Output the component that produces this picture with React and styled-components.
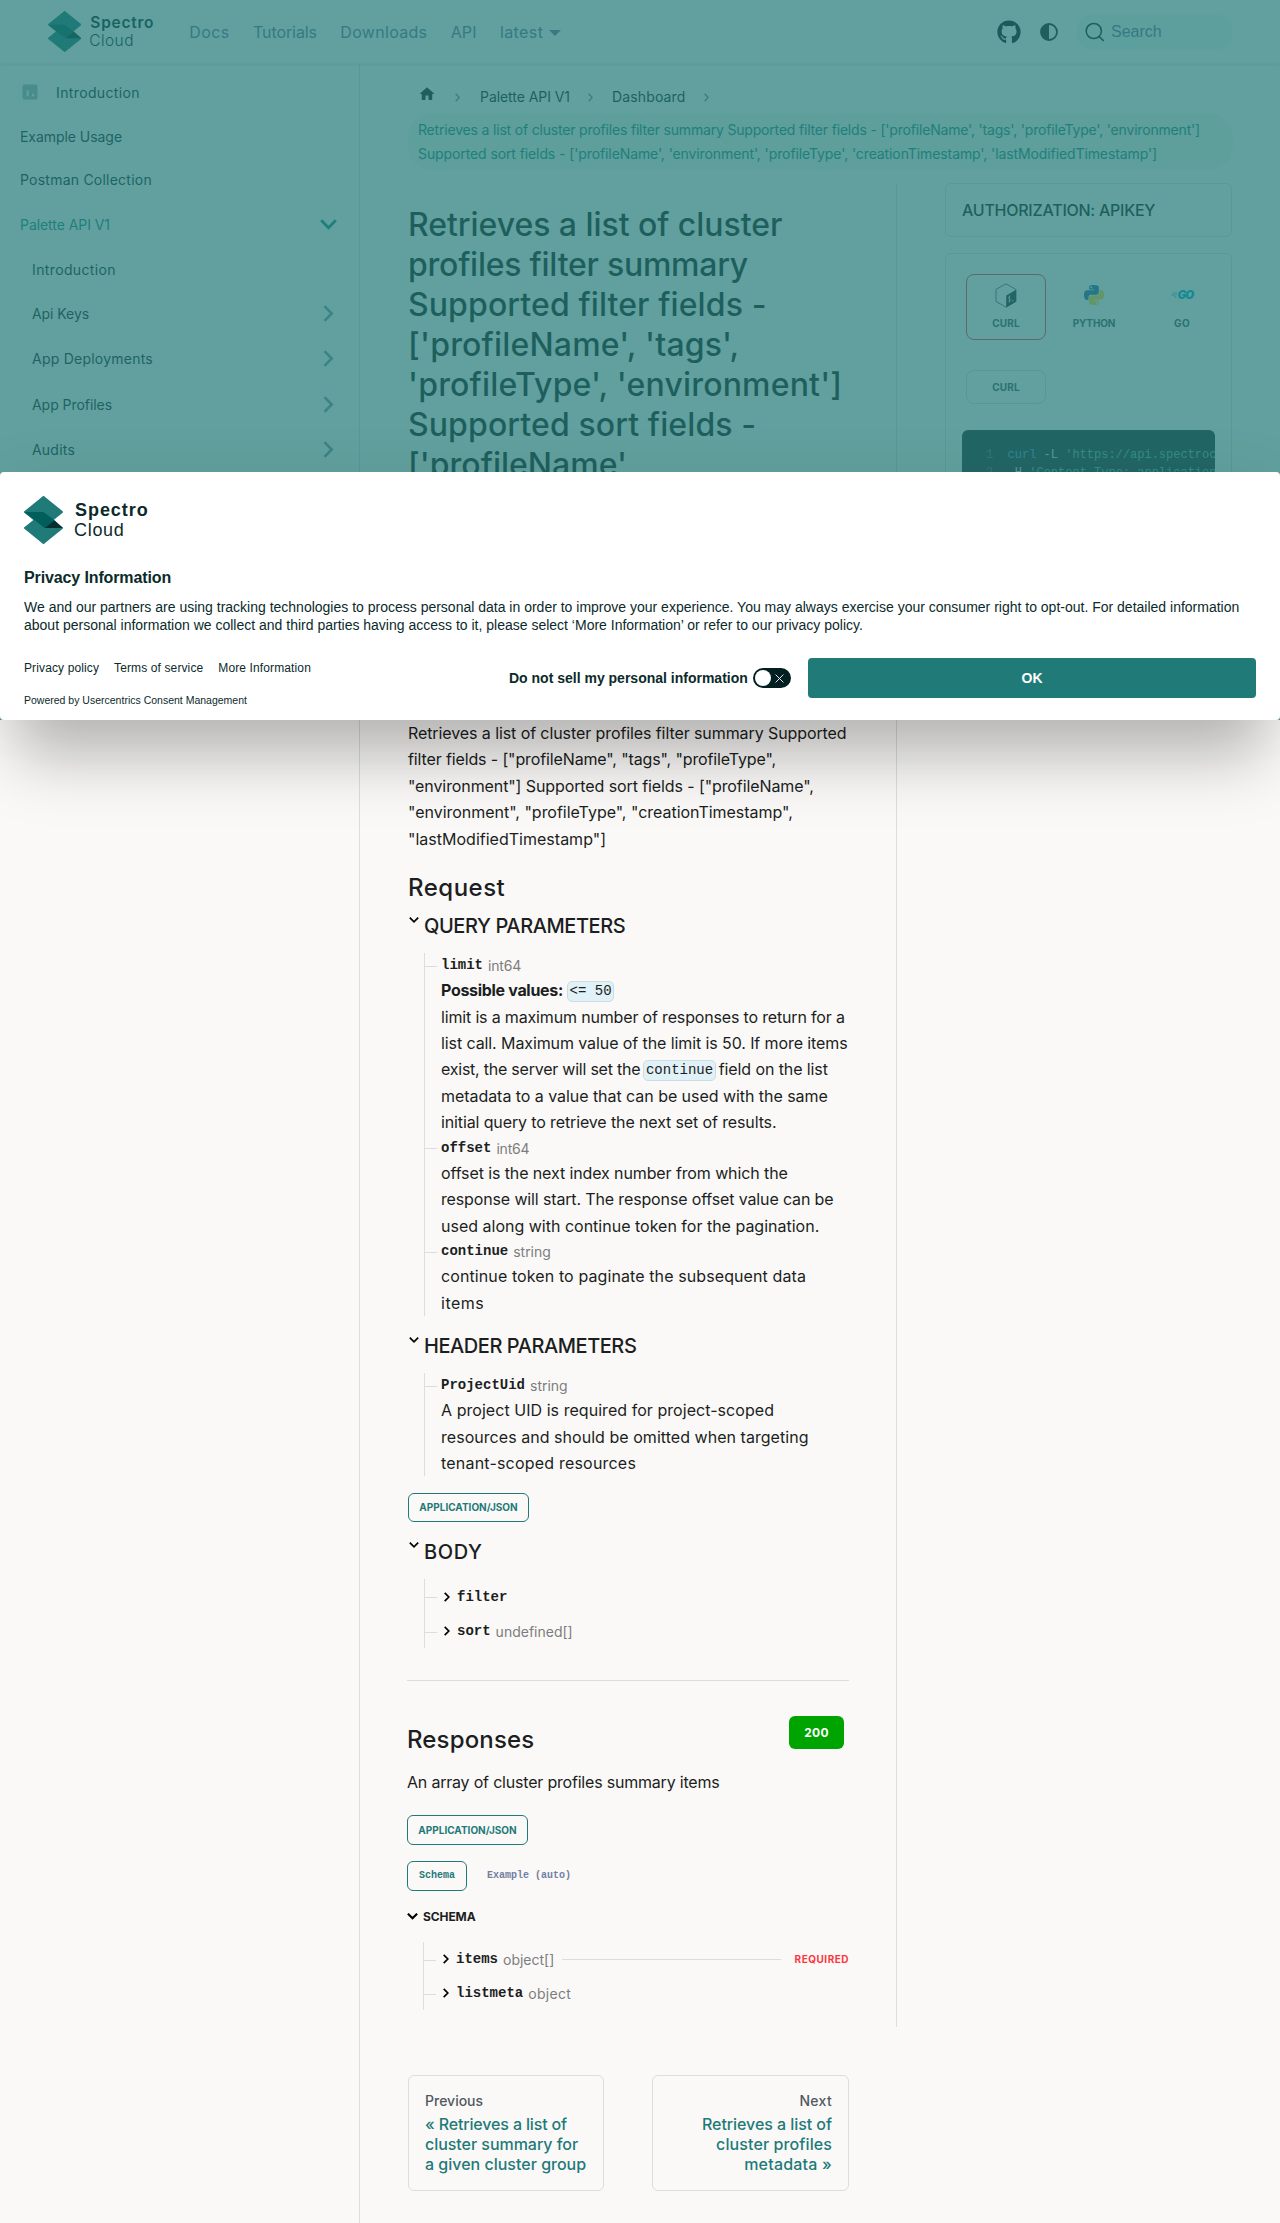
import React from "react";
import styled, { createGlobalStyle } from "styled-components";
import { FaGithub } from "react-icons/fa";

const sans = `Inter, "Noto Sans", sans-serif`;
const arial = `"Liberation Sans", Arial, sans-serif`;
const mono = `"Liberation Mono", "Courier New", monospace`;
const teal = "#1f7a78";
const ink = "#1c1e21";
const line = "#dadde1";
const nav = "#6b76a2";

const GlobalStyle = createGlobalStyle`
  *, *::before, *::after { box-sizing: border-box; }
  body { margin: 0; background: #faf9f8; color: ${ink}; font-family: ${sans}; font-size: 16px; }
  a { color: inherit; text-decoration: none; }
  h1, h2, h3, p, ul { margin: 0; padding: 0; font-weight: 400; }
  ul { list-style: none; }
  svg { display: block; flex: none; }
`;

const Page = styled.div`
  position: relative;
  width: 1280px;
  height: 2223px;
  overflow: hidden;
`;

/* One line of text with its own tracking */
const Line = styled.span`
  display: block;
  white-space: nowrap;
  letter-spacing: ${(p) => p.$ls || 0}px;
`;

/* ---------- Navbar ---------- */
const Navbar = styled.header`
  height: 64px;
  padding: 0 48px;
  display: flex;
  align-items: center;
  border-bottom: 1px solid #f0efee;
  box-shadow: 0 1px 2px rgba(0, 0, 0, 0.1);
`;

const Brand = styled.a`
  display: flex;
  align-items: center;
  gap: ${(p) => p.$gap}px;
`;

const BrandText = styled.div`
  display: flex;
  flex-direction: column;
  color: #0b2a2b;
  line-height: ${(p) => p.$lh}px;
  font-size: ${(p) => p.$size}px;
`;

const BrandTop = styled(Line)`
  font-weight: 600;
`;

const BrandBottom = styled(Line)`
  font-weight: 300;
  margin-left: -1px;
`;

const NavLinks = styled.nav`
  display: flex;
  align-items: center;
  gap: 23.4px;
  margin-left: 35px;
  color: ${nav};
`;

const Caret = styled.i`
  margin-left: -18px;
  border: 6px solid transparent;
  border-top: 6.5px solid ${nav};
  border-bottom: 0;
  margin-top: 3px;
`;

const NavTools = styled.div`
  margin-left: auto;
  display: flex;
  align-items: center;
`;

const Search = styled.div`
  margin-left: 19px;
  width: 155px;
  height: 36px;
  border-radius: 18px;
  background: #e9f3f2;
  display: flex;
  align-items: center;
  gap: 6px;
  padding-left: 8px;
  color: ${nav};
  font-family: ${arial};
  font-size: 16px;
`;

/* ---------- Layout ---------- */
const Shell = styled.div`
  display: grid;
  grid-template-columns: 360px 1fr;
  height: 2159px;
`;

const Sidebar = styled.aside`
  border-right: 1px solid ${line};
  padding-top: 6px;
  font-size: 14px;
`;

const SideItem = styled.a`
  display: flex;
  align-items: center;
  height: ${(p) => p.$h || 45}px;
  padding-left: ${(p) => (p.$nested ? 32 : 20)}px;
  padding-right: ${(p) => (p.$open ? 22 : 25)}px;
  color: ${(p) => (p.$active ? "#1f8a80" : "#1c2b33")};
  justify-content: space-between;
`;

const SideLabel = styled.div`
  display: flex;
  align-items: center;
  gap: 16px;
`;

const Main = styled.main`
  min-width: 0;
`;

const Crumbs = styled.div`
  height: 119px;
  padding: 22px 0 0 48px;
  font-size: 14px;
`;

const CrumbRow = styled.div`
  display: flex;
  align-items: center;
  height: 20px;
`;

const Crumb = styled(Line)`
  margin-left: ${(p) => p.$ml}px;
`;

const CrumbHome = styled.a`
  margin: -4px 0 0 10px;
`;

const CrumbPill = styled.div`
  margin-top: 7px;
  height: 57px;
  width: 825px;
  padding: 5px 0 0 10px;
  border-radius: 24px;
  background: rgba(0, 0, 0, 0.035);
  line-height: 24px;
  color: #1c8c84;
`;

const Columns = styled.div`
  display: grid;
  grid-template-columns: 537px 335px;
`;

const Doc = styled.article`
  height: 1844px;
  padding: 21px 47px 0 48px;
  border-right: 1px solid ${line};
`;

const Title = styled.h1`
  font-size: 32px;
  line-height: 40px;
  font-weight: 450;
  height: 516px;
  padding-top: 1px;
`;

const Paragraph = styled.p`
  line-height: 26.4px;
`;

const Heading = styled.h2`
  font-size: 24px;
  font-weight: 450;
  line-height: 30px;
`;

const Section = styled.section`
  margin-top: ${(p) => p.$mt}px;
`;

const SectionTitle = styled.h3`
  display: flex;
  align-items: center;
  height: 30px;
  font-size: 20px;
  font-weight: 450;
  svg {
    margin: ${(p) => p.$up || -13}px 5px 0 1px;
  }
`;

const Tree = styled.ul`
  margin: ${(p) => p.$mt || 12}px 0 0 16px;
  border-left: 1px solid ${line};
`;

const Body = styled.div`
  padding-left: 16px;
  line-height: 26.4px;
`;

const ParamRow = styled.div`
  display: flex;
  align-items: center;
  height: ${(p) => p.$h || 24.2}px;
  &::before {
    content: "";
    width: 12px;
    height: 1px;
    margin: 2px 4px 0 0;
    background: ${line};
    flex: none;
  }
`;

const Chevron = styled.svg`
  margin: 0 7px 0 3px;
`;

const ParamName = styled.strong`
  font-family: ${mono};
  font-size: 14px;
  font-weight: 700;
`;

const ParamType = styled(Line)`
  font-size: 14px;
  color: #7d7d7d;
  margin: 1px 0 0 5px;
`;

const Rule = styled.span`
  flex: 1;
  height: 1px;
  background: ${line};
  margin: 0 14px 0 8px;
`;

const Required = styled(Line)`
  color: #fa383e;
  font-size: 10px;
  font-weight: 700;
`;

const Mixed = styled.div`
  display: flex;
  align-items: center;
  height: 26.4px;
`;

const Code = styled.code`
  font-family: ${mono};
  font-size: 14px;
  line-height: 19px;
  height: 21px;
  margin: 2px ${(p) => p.$mr || 0}px 0 ${(p) => p.$ml || 4}px;
  padding: 0 1.6px;
  border: 1px solid #c9dde3;
  border-radius: 5px;
  background: #e0f1f7;
`;

const Strong = styled(Line)`
  font-weight: 700;
`;

const Chip = styled.button`
  display: flex;
  align-items: center;
  justify-content: center;
  width: ${(p) => p.$w || 121}px;
  height: ${(p) => p.$h || 30}px;
  padding: 0 0 ${(p) => p.$pb || 0}px;
  border: 1px solid ${(p) => (p.$plain ? "transparent" : teal)};
  border-radius: 6px;
  background: none;
  color: ${(p) => (p.$plain ? "#7080a4" : teal)};
  font: 700 10px ${(p) => (p.$mono ? mono : sans)};
  margin-top: ${(p) => p.$mt || 0}px;
`;

const Divider = styled.hr`
  margin: 32px 0 0 -1px;
  border: 0;
  height: 1px;
  background: ${line};
`;

const Responses = styled.section`
  margin-left: -1px;
`;

const ResponsesHead = styled.div`
  display: flex;
  justify-content: space-between;
  height: 53px;
  margin-top: 35px;
  padding-right: 5px;
  h2 {
    margin-top: 9px;
  }
`;

const Status = styled.span`
  display: flex;
  align-items: center;
  justify-content: center;
  width: 55px;
  height: 33px;
  border-radius: 6px;
  background: #00a400;
  color: #fff;
  font-size: 12px;
  font-weight: 700;
`;

const Tabs = styled.div`
  display: flex;
  gap: 10px;
  margin-top: 16px;
`;

const SchemaTitle = styled.div`
  display: flex;
  align-items: center;
  gap: 5px;
  height: 20px;
  margin-top: 15.5px;
  font-size: 12px;
  font-weight: 700;
`;

const Pager = styled.nav`
  display: grid;
  grid-template-columns: 196px 197px;
  gap: 48px;
  margin: 48px 0 0 48px;
`;

const PagerCard = styled.a`
  height: 116px;
  border: 1px solid ${line};
  border-radius: 6px;
  padding: 15px 16px;
  display: flex;
  flex-direction: column;
  align-items: ${(p) => (p.$end ? "flex-end" : "flex-start")};
  font-weight: 450;
  line-height: 20px;
  color: ${teal};
`;

const PagerSub = styled(Line)`
  font-size: 14px;
  color: #525860;
  margin-bottom: 3px;
`;

/* ---------- Right column ---------- */
const Aside = styled.aside`
  padding-left: 48px;
`;

const Card = styled.div`
  border: 1px solid #d6dfe0;
  border-radius: 6px;
  padding: ${(p) => p.$pad};
  font-weight: 450;
  height: ${(p) => p.$h}px;
`;

const LangTabs = styled.div`
  display: grid;
  grid-template-columns: 80px 80px 80px;
  gap: 8px;
  padding-left: 4px;
  overflow: hidden;
`;

const Lang = styled.button`
  height: ${(p) => (p.$small ? 34 : 66)}px;
  border: 1px solid ${(p) => (p.$active ? "#f4433c" : p.$small ? "#cfdcdd" : "transparent")};
  border-radius: 8px;
  padding: ${(p) => (p.$small ? "0" : "5px 0 0")};
  background: none;
  display: flex;
  flex-direction: column;
  align-items: center;
  justify-content: ${(p) => (p.$small ? "center" : "flex-start")};
  gap: 7px;
  color: #4b5a63;
  font: 700 10px ${sans};
`;

const LangIcon = styled.div`
  height: 30px;
  display: flex;
  align-items: center;
`;

const GoMark = styled.span`
  display: flex;
  align-items: center;
  gap: 1px;
  color: #00acd7;
  font: italic 900 11.5px/12px ${sans};
  letter-spacing: -0.9px;
  margin-top: -1px;
`;

const Terminal = styled.pre`
  margin: 26px 0 0;
  height: 200px;
  width: 253px;
  overflow: hidden;
  border-radius: 6px;
  background: #25363a;
  color: #d8e4e4;
  font: 12px/18px ${mono};
  padding: 16px 0 0 24px;
`;

const Tok = styled.span`
  color: ${(p) => p.$c};
`;

/* ---------- Consent dialog ---------- */
const Overlay = styled.div`
  position: absolute;
  inset: 0 0 auto 0;
  height: 720px;
  background: rgba(31, 122, 120, 0.7);
  display: flex;
  align-items: flex-end;
`;

const Dialog = styled.section`
  width: 1280px;
  height: 248px;
  border-radius: 4px;
  background: #fff;
  padding: 24px;
  color: #0b2a2b;
  font-family: ${arial};
  box-shadow: 0 54px 60px -16px rgba(0, 0, 0, 0.25), 0 0 60px rgba(0, 0, 0, 0.06);
`;

const DialogTitle = styled.h2`
  margin-top: 24px;
  font-size: 16px;
  line-height: 20px;
  font-weight: 700;
  letter-spacing: -0.12px;
`;

const DialogText = styled.p`
  margin-top: 10px;
  font-size: 14px;
  line-height: 18px;
`;

const DialogFoot = styled.div`
  display: flex;
  margin-top: 24px;
`;

const FootLinks = styled.div`
  width: 485px;
  font-size: 12px;
  line-height: 14px;
  padding-top: 3px;
`;

const LinkRow = styled.div`
  display: flex;
  gap: 15px;
  letter-spacing: 0.12px;
`;

const Powered = styled.div`
  margin-top: 18px;
  font-size: 10.5px;
`;

const OptOut = styled.label`
  display: flex;
  align-items: center;
  height: 40px;
  gap: 5px;
  width: 299px;
  font-size: 14px;
  font-weight: 700;
`;

const Toggle = styled.span`
  width: 38px;
  height: 20px;
  border-radius: 10px;
  background: #031f22;
  display: flex;
  align-items: center;
  justify-content: space-between;
  padding: 0 7px 0 2px;
  &::before {
    content: "";
    width: 16px;
    height: 16px;
    border-radius: 50%;
    background: #fff;
  }
`;

const OkButton = styled.button`
  width: 448px;
  height: 40px;
  border: 0;
  border-radius: 4px;
  background: ${teal};
  color: #fff;
  font: 700 14px ${arial};
`;

/* ---------- Icons ---------- */
const LogoMark = ({ h }) => (
  <svg width={(h * 39) / 48} height={h} viewBox="0 0 39 48">
    <g fill="#1f7a78" stroke="#1f7a78" strokeWidth="2" strokeLinejoin="round">
      <path d="M19.5 1 38 16 19.5 31 1 16z" />
      <path d="M19.5 17 38 32 19.5 47 1 32z" />
    </g>
    <path d="M.4 16H19.5L30.5 24.3 20.5 32z" fill="#005f5c" />
    <path d="M30.5 24.3 38.6 32H20.5z" fill="#052f31" />
  </svg>
);

const Down = ({ size = 10, color = "#000", w = 1.7 }) => (
  <svg width={size} height={size * 0.6} viewBox="0 0 10 6" fill="none" stroke={color} strokeWidth={w}>
    <path d="M.8.6 5 4.8 9.2.6" />
  </svg>
);

const Right = () => (
  <Chevron width="6" height="10" viewBox="0 0 6 10" fill="none" stroke="#000" strokeWidth="1.7">
    <path d="M.7.8 4.8 5 .7 9.2" />
  </Chevron>
);

const CrumbArrow = styled.svg`
  margin-left: ${(p) => p.$ml}px;
  margin-top: 2px;
`;

const CrumbSep = ({ ml }) => (
  <CrumbArrow $ml={ml} width="5" height="9" viewBox="0 0 5 9" fill="none" stroke="#7b8288" strokeWidth="1.3">
    <path d="M.7.7 4.2 4.5.7 8.3" />
  </CrumbArrow>
);

const SideChevron = ({ open }) =>
  open ? (
    <svg width="17" height="11" viewBox="0 0 17 11" fill="none" stroke="#1f8a80" strokeWidth="2.8">
      <path d="M1.2 1.3 8.5 8.7 15.8 1.3" />
    </svg>
  ) : (
    <svg width="11" height="17" viewBox="0 0 11 17" fill="none" stroke="#8294a6" strokeWidth="2.6">
      <path d="M1.5 1.2 8.7 8.5 1.5 15.8" />
    </svg>
  );

const HomeIcon = () => (
  <svg width="18" height="18" viewBox="0 0 24 24" fill={ink}>
    <path d="M10 19v-5h4v5c0 .55.45 1 1 1h3c.55 0 1-.45 1-1v-7h1.7c.46 0 .68-.57.33-.87L12.67 3.6c-.38-.34-.96-.34-1.34 0l-8.36 7.53c-.34.3-.13.87.33.87H5v7c0 .55.45 1 1 1h3c.55 0 1-.45 1-1z" />
  </svg>
);

const ContrastIcon = styled.svg`
  margin-left: 19px;
`;

const BashIcon = () => (
  <svg width="22" height="25" viewBox="0 0 22 25">
    <path d="M11 .8 20.8 6.4V18.4L11 24.2 1 18.4V6.4z" fill="none" stroke="#3a4f55" strokeWidth=".8" />
    <path d="M11.2 12.6 21.2 6.8V18.4L11.2 24.4z" fill="#24363a" />
    <path
      d="M15.2 13.2c-1.6.2-2 1.9-.8 2.6 1.2.6.9 2.4-.8 2.6M14.4 12.5v7M16.8 18.1l1.7-.9"
      fill="none"
      stroke="#e7f1f1"
      strokeWidth=".8"
    />
  </svg>
);

const snake =
  "M14.25.18l.9.2.73.26.59.3.45.32.34.34.25.34.16.33.1.3.04.26.02.2-.01.13V8.5l-.05.63-.13.55-.21.46-.26.38-.3.31-.33.25-.35.19-.35.14-.33.1-.3.07-.26.04-.21.02H8.77l-.69.05-.59.14-.5.22-.41.27-.33.32-.27.35-.2.36-.15.37-.1.35-.07.32-.04.27-.02.21v3.06H3.17l-.21-.03-.28-.07-.32-.12-.35-.18-.36-.26-.36-.36-.35-.46-.32-.59-.28-.73-.21-.88-.14-1.05-.05-1.23.06-1.22.16-1.04.24-.87.32-.71.36-.57.4-.44.42-.33.42-.24.4-.16.36-.1.32-.05.24-.01h.16l.06.01h8.16v-.83H6.18l-.01-2.75-.02-.37.05-.34.11-.31.17-.28.25-.26.31-.23.38-.2.44-.18.51-.15.58-.12.64-.1.71-.06.77-.04.84-.02 1.27.05zm-6.3 1.98l-.23.33-.08.41.08.41.23.34.33.22.41.09.41-.09.33-.22.23-.34.08-.41-.08-.41-.23-.33-.33-.22-.41-.09-.41.09z";

const PythonIcon = () => (
  <svg width="20" height="20" viewBox="0 0 24 24">
    <path d={snake} fill="#2f6fa8" />
    <path d={snake} fill="#ffd845" transform="rotate(180 12 12)" />
  </svg>
);

const Logo = ({ h, gap, size, lh, top, bottom }) => (
  <Brand $gap={gap}>
    <LogoMark h={h} />
    <BrandText $size={size} $lh={lh}>
      <BrandTop $ls={top}>Spectro</BrandTop>
      <BrandBottom $ls={bottom}>Cloud</BrandBottom>
    </BrandText>
  </Brand>
);

const Param = ({ name, type, ls, children }) => (
  <li>
    <ParamRow>
      <ParamName>{name}</ParamName>
      <ParamType $ls={ls}>{type}</ParamType>
    </ParamRow>
    <Body>{children}</Body>
  </li>
);

const sidebar = [
  ["Api Keys", -0.07],
  ["App Deployments", 0.23],
  ["App Profiles", -0.05],
  ["Audits", 0.21],
];

export default function App() {
  return (
    <Page>
      <GlobalStyle />
      <Navbar>
        <Logo h={41} gap={9} size={15.5} lh={18} top={0.75} bottom={0.4} />
        <NavLinks>
          <Line $ls={0.4}>Docs</Line>
          <Line $ls={-0.08}>Tutorials</Line>
          <Line $ls={0.3}>Downloads</Line>
          <Line $ls={0.1}>API</Line>
          <Line $ls={0.4}>latest</Line>
          <Caret />
        </NavLinks>
        <NavTools>
          <FaGithub size={24} color="#0b1214" />
          <ContrastIcon width="18" height="18" viewBox="0 0 18 18">
            <circle cx="9" cy="9" r="8" fill="none" stroke={ink} strokeWidth="1.8" />
            <path d="M9 1a8 8 0 0 0 0 16z" fill={ink} />
          </ContrastIcon>
          <Search>
            <svg width="20" height="20" viewBox="0 0 20 20" fill="none" stroke={ink} strokeWidth="1.5">
              <circle cx="8.8" cy="9" r="7.6" />
              <path d="M14.2 14.6 18.8 19" />
            </svg>
            Search
          </Search>
        </NavTools>
      </Navbar>

      <Shell>
        <Sidebar>
          <SideItem $h={44}>
            <SideLabel>
              <svg width="20" height="20" viewBox="0 0 24 24" fill="#a9b7b9">
                <path d="M19 3H5c-1.1 0-2 .9-2 2v14c0 1.1.9 2 2 2h14c1.1 0 2-.9 2-2V5c0-1.1-.9-2-2-2zM10.500 17H8V10h2.500v7zm6.500 0h-2.500v-3h2.500v3z" />
              </svg>
              <Line $ls={0.37}>Introduction</Line>
            </SideLabel>
          </SideItem>
          <SideItem $h={44}>
            <Line $ls={-0.05}>Example Usage</Line>
          </SideItem>
          <SideItem $h={43}>
            <Line $ls={0.23}>Postman Collection</Line>
          </SideItem>
          <SideItem $h={46} $active $open>
            <Line $ls={-0.06}>Palette API V1</Line>
            <SideChevron open />
          </SideItem>
          <SideItem $h={44} $nested>
            <Line $ls={0.37}>Introduction</Line>
          </SideItem>
          {sidebar.map(([label, ls]) => (
            <SideItem key={label} $nested $h={45.3}>
              <Line $ls={ls}>{label}</Line>
              <SideChevron />
            </SideItem>
          ))}
        </Sidebar>

        <Main>
          <Crumbs>
            <CrumbRow>
              <CrumbHome>
                <HomeIcon />
              </CrumbHome>
              <CrumbSep ml={19} />
              <Crumb $ml={20} $ls={-0.06}>Palette API V1</Crumb>
              <CrumbSep ml={18} />
              <Crumb $ml={19} $ls={0.15}>Dashboard</Crumb>
              <CrumbSep ml={18} />
            </CrumbRow>
            <CrumbPill>
              <Line $ls={-0.185}>
                Retrieves a list of cluster profiles filter summary Supported filter fields - ['profileName', 'tags',
                'profileType', 'environment']
              </Line>
              <Line $ls={-0.101}>
                Supported sort fields - ['profileName', 'environment', 'profileType', 'creationTimestamp',
                'lastModifiedTimestamp']
              </Line>
            </CrumbPill>
          </Crumbs>

          <Columns>
            <Doc>
              <Title>
                <Line $ls={-0.05}>Retrieves a list of cluster</Line>
                <Line $ls={-0.25}>profiles filter summary</Line>
                <Line $ls={0.1}>Supported filter fields -</Line>
                <Line $ls={0.18}>['profileName', 'tags',</Line>
                <Line $ls={0.18}>'profileType', 'environment']</Line>
                <Line $ls={0.1}>Supported sort fields -</Line>
                <Line $ls={0}>['profileName'</Line>
              </Title>

              <Paragraph>
                <Line $ls={-0.09}>Retrieves a list of cluster profiles filter summary Supported</Line>
                <Line $ls={-0.127}>filter fields - ["profileName", "tags", "profileType",</Line>
                <Line $ls={-0.1}>"environment"] Supported sort fields - ["profileName",</Line>
                <Line $ls={-0.02}>"environment", "profileType", "creationTimestamp",</Line>
                <Line $ls={0.01}>"lastModifiedTimestamp"]</Line>
              </Paragraph>

              <Section $mt={21}>
                <Heading>
                  <Line $ls={0.5}>Request</Line>
                </Heading>
              </Section>

              <Section $mt={8}>
                <SectionTitle>
                  <Down />
                  <Line $ls={-0.41}>QUERY PARAMETERS</Line>
                </SectionTitle>
                <Tree>
                  <Param name="limit" type="int64" ls={-0.19}>
                    <Mixed>
                      <Strong $ls={-0.31}>Possible values:</Strong>
                      <Code>{"<= 50"}</Code>
                    </Mixed>
                    <Line $ls={-0.165}>limit is a maximum number of responses to return for a</Line>
                    <Line $ls={-0.095}>list call. Maximum value of the limit is 50. If more items</Line>
                    <Mixed>
                      <Line $ls={-0.23}>exist, the server will set the</Line>
                      <Code $ml={3} $mr={3}>continue</Code>
                      <Line $ls={-0.1}>field on the list</Line>
                    </Mixed>
                    <Line $ls={-0.05}>metadata to a value that can be used with the same</Line>
                    <Line $ls={-0.125}>initial query to retrieve the next set of results.</Line>
                  </Param>
                  <Param name="offset" type="int64" ls={-0.19}>
                    <Line $ls={-0.11}>offset is the next index number from which the</Line>
                    <Line $ls={-0.14}>response will start. The response offset value can be</Line>
                    <Line $ls={0}>used along with continue token for the pagination.</Line>
                  </Param>
                  <Param name="continue" type="string" ls={-0.03}>
                    <Line $ls={0.1}>continue token to paginate the subsequent data</Line>
                    <Line $ls={0.5}>items</Line>
                  </Param>
                </Tree>
              </Section>

              <Section $mt={15}>
                <SectionTitle>
                  <Down />
                  <Line $ls={-0.44}>HEADER PARAMETERS</Line>
                </SectionTitle>
                <Tree>
                  <Param name="ProjectUid" type="string" ls={-0.03}>
                    <Line $ls={0.048}>A project UID is required for project-scoped</Line>
                    <Line $ls={0.04}>resources and should be omitted when targeting</Line>
                    <Line $ls={0.2}>tenant-scoped resources</Line>
                  </Param>
                </Tree>
              </Section>

              <Chip $mt={16.4} $h={29}>APPLICATION/JSON</Chip>

              <Section $mt={15}>
                <SectionTitle>
                  <Down />
                  <Line $ls={0.6}>BODY</Line>
                </SectionTitle>
                <Tree $mt={12}>
                  <ParamRow $h={35.5}>
                    <Right />
                    <ParamName>filter</ParamName>
                  </ParamRow>
                  <ParamRow $h={33.5}>
                    <Right />
                    <ParamName>sort</ParamName>
                    <ParamType $ls={0}>undefined[]</ParamType>
                  </ParamRow>
                </Tree>
              </Section>

              <Divider />

              <Responses>
                <ResponsesHead>
                  <Heading>
                    <Line $ls={0.15}>Responses</Line>
                  </Heading>
                  <Status>
                    <Line $ls={0.3}>200</Line>
                  </Status>
                </ResponsesHead>
                <Paragraph>
                  <Line $ls={-0.2}>An array of cluster profiles summary items</Line>
                </Paragraph>
                <Chip $mt={19.5}>APPLICATION/JSON</Chip>
                <Tabs>
                  <Chip $mono $w={60} $pb={1}>Schema</Chip>
                  <Chip $mono $plain $w={104} $pb={1}>Example (auto)</Chip>
                </Tabs>
                <SchemaTitle>
                  <Down size={11} w={1.9} />
                  <Line $ls={-0.1}>SCHEMA</Line>
                </SchemaTitle>
                <Tree $mt={16}>
                  <ParamRow $h={34.5}>
                    <Right />
                    <ParamName>items</ParamName>
                    <ParamType $ls={0}>object[]</ParamType>
                    <Rule />
                    <Required $ls={0.5}>REQUIRED</Required>
                  </ParamRow>
                  <ParamRow $h={33.5}>
                    <Right />
                    <ParamName>listmeta</ParamName>
                    <ParamType $ls={0.3}>object</ParamType>
                  </ParamRow>
                </Tree>
              </Responses>
            </Doc>

            <Aside>
              <Card $h={54} $pad="16px 16px">
                <Line $ls={-0.25}>AUTHORIZATION: APIKEY</Line>
              </Card>
              <Section $mt={16}>
                <Card $h={440} $pad="20px 16px">
                  <LangTabs>
                    <Lang $active>
                      <LangIcon>
                        <BashIcon />
                      </LangIcon>
                      <Line $ls={0.2}>CURL</Line>
                    </Lang>
                    <Lang>
                      <LangIcon>
                        <PythonIcon />
                      </LangIcon>
                      <Line $ls={-0.1}>PYTHON</Line>
                    </Lang>
                    <Lang>
                      <LangIcon>
                        <GoMark>
                          <svg width="6" height="6" viewBox="0 0 6 6" stroke="#00acd7" strokeWidth=".7">
                            <path d="M1.5 1H6M0 3H5.500M3 5H5.500" />
                          </svg>
                          GO
                        </GoMark>
                      </LangIcon>
                      <Line $ls={0.5}>GO</Line>
                    </Lang>
                  </LangTabs>
                  <Section $mt={30}>
                    <LangTabs>
                      <Lang $small>
                        <Line $ls={0.2}>CURL</Line>
                      </Lang>
                    </LangTabs>
                  </Section>
                  <Terminal>
                    <Tok $c="#5d7478">1</Tok>
                    {"  "}
                    <Tok $c="#5a9fd8">curl</Tok>
                    {" -L "}
                    <Tok $c="#6cb89b">'https://api.spectroc</Tok>
                    {"\n"}
                    <Tok $c="#5d7478">2</Tok>
                    {"  -H "}
                    <Tok $c="#6cb89b">'Content-Type: application</Tok>
                  </Terminal>
                </Card>
              </Section>
            </Aside>
          </Columns>

          <Pager>
            <PagerCard>
              <PagerSub>Previous</PagerSub>
              <Line $ls={-0.15}>« Retrieves a list of</Line>
              <Line $ls={-0.04}>cluster summary for</Line>
              <Line>a given cluster group</Line>
            </PagerCard>
            <PagerCard $end>
              <PagerSub $ls={0.3}>Next</PagerSub>
              <Line $ls={-0.06}>Retrieves a list of</Line>
              <Line $ls={0.1}>cluster profiles</Line>
              <Line $ls={0.2}>metadata »</Line>
            </PagerCard>
          </Pager>
        </Main>
      </Shell>

      <Overlay>
        <Dialog>
          <Logo h={48} gap={12} size={18} lh={20} top={0.95} bottom={0.7} />
          <DialogTitle>Privacy Information</DialogTitle>
          <DialogText>
            We and our partners are using tracking technologies to process personal data in order to improve your
            experience. You may always exercise your consumer right to opt-out. For detailed information about personal
            information we collect and third parties having access to it, please select ‘More Information’ or refer to
            our privacy policy.
          </DialogText>
          <DialogFoot>
            <FootLinks>
              <LinkRow>
                <a>Privacy policy</a>
                <a>Terms of service</a>
                <a>More Information</a>
              </LinkRow>
              <Powered>Powered by Usercentrics Consent Management</Powered>
            </FootLinks>
            <OptOut>
              Do not sell my personal information
              <Toggle>
                <svg width="9" height="9" viewBox="0 0 9 9" stroke="#fff" strokeWidth="0.9">
                  <path d="M.6.6 8.4 8.4M8.4.6.6 8.4" />
                </svg>
              </Toggle>
            </OptOut>
            <OkButton>OK</OkButton>
          </DialogFoot>
        </Dialog>
      </Overlay>
    </Page>
  );
}
